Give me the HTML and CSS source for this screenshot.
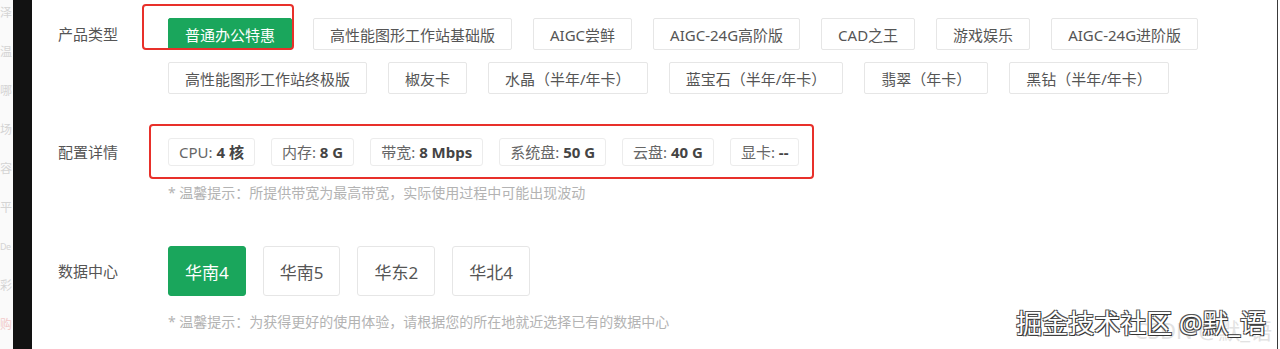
FILE: index.html
```html
<!DOCTYPE html>
<html lang="zh-CN">
<head>
  <meta charset="UTF-8">
  <meta name="viewport" content="width=device-width, initial-scale=1.0">
  <title>选择配置</title>
  <link rel="stylesheet" href="styles.css">
</head>
<body>
  <div class="screen">
    <!-- page behind, only a sliver shows -->
    <aside class="side-peek">
      <div class="peek-item">泽</div>
      <div class="peek-item">温</div>
      <div class="peek-item">哪</div>
      <div class="peek-item">场</div>
      <div class="peek-item">容</div>
      <div class="peek-item">平</div>
      <div class="peek-item peek-small">De</div>
      <div class="peek-item">彩</div>
      <div class="peek-item peek-red">购</div>
    </aside>
    <div class="divider"></div>

    <main class="panel">
      <section class="field field-product">
        <div class="field-label">产品类型</div>
        <div class="options">
          <button class="opt opt-on">普通办公特惠<span class="mark mark-product"></span></button>
          <button class="opt">高性能图形工作站基础版</button>
          <button class="opt">AIGC尝鲜</button>
          <button class="opt">AIGC-24G高阶版</button>
          <button class="opt">CAD之王</button>
          <button class="opt">游戏娱乐</button>
          <button class="opt">AIGC-24G进阶版</button>
          <button class="opt">高性能图形工作站终极版</button>
          <button class="opt">椒友卡</button>
          <button class="opt">水晶（半年/年卡）</button>
          <button class="opt">蓝宝石（半年/年卡）</button>
          <button class="opt">翡翠（年卡）</button>
          <button class="opt">黑钻（半年/年卡）</button>
        </div>
      </section>

      <section class="field field-config">
        <div class="field-label">配置详情</div>
        <div class="field-body">
          <div class="specs">
            <span class="spec">CPU: <b>4 核</b></span>
            <span class="spec">内存: <b>8 G</b></span>
            <span class="spec">带宽: <b>8 Mbps</b></span>
            <span class="spec">系统盘: <b>50 G</b></span>
            <span class="spec">云盘: <b>40 G</b></span>
            <span class="spec">显卡: <b>--</b></span>
            <span class="mark mark-config"></span>
          </div>
          <p class="tip">* 温馨提示：所提供带宽为最高带宽，实际使用过程中可能出现波动</p>
        </div>
      </section>

      <section class="field field-region">
        <div class="field-label">数据中心</div>
        <div class="field-body">
          <div class="regions">
            <button class="region region-on">华南4</button>
            <button class="region">华南5</button>
            <button class="region">华东2</button>
            <button class="region">华北4</button>
          </div>
          <p class="tip">* 温馨提示：为获得更好的使用体验，请根据您的所在地就近选择已有的数据中心</p>
        </div>
      </section>

      <div class="watermark">
        <span class="wm-back">CSDN @默_语</span>
        <span class="wm-front">掘金技术社区 @默_语</span>
      </div>
    </main>
  </div>
</body>
</html>
```

FILE: styles.css
```css
/* General Reset */
* {
  margin: 0;
  padding: 0;
  box-sizing: border-box;
  font-family: 'Noto Sans', 'Noto Sans CJK SC', sans-serif;
}

body {
  background: #fff;
  width: 1280px;
  height: 349px;
  overflow: hidden;
}

.screen {
  display: flex;
  height: 349px;
  padding-right: 2px;
}

/* sliver of the page behind */
.side-peek {
  width: 13px;
  overflow: hidden;
  background: #fafafa;
}

.peek-item {
  white-space: nowrap;
  font-size: 12px;
  line-height: 39px;
  color: #d4d4d4;
}

.peek-item:first-child {
  margin-top: -7px;
}

.peek-small {
  font-size: 9px;
  letter-spacing: -0.5px;
}

.peek-red {
  color: #f2caca;
}

.divider {
  width: 19px;
  background: #121212;
}

.panel {
  position: relative;
  flex: 1;
  background: #fff;
  border-right: 1px solid #3a3a3a;
  padding: 18px 0 0 26px;
}

/* Rows */
.field {
  display: flex;
  align-items: flex-start;
}

.field-label {
  width: 110px;
  flex-shrink: 0;
  font-size: 15px;
  color: #555;
}

.field-product .field-label {
  line-height: 32px;
}

.field-config {
  margin-top: 44px;
}

.field-config .field-label {
  line-height: 28px;
}

.field-region {
  margin-top: 43px;
}

.field-region .field-label {
  line-height: 50px;
}

/* Product options */
.options {
  display: flex;
  flex-wrap: wrap;
  gap: 12px 21px;
  width: 1060px;
}

.opt {
  position: relative;
  height: 32px;
  padding: 0 16px;
  font-size: 15px;
  color: #555;
  background: #fff;
  border: 1px solid #e6e6e6;
  border-radius: 2px;
  cursor: pointer;
}

.opt-on {
  background: #1aa65c;
  border-color: #1aa65c;
  color: #fff;
}

/* red annotation boxes */
.mark {
  position: absolute;
  border: 2px solid #e8302a;
  border-radius: 4px;
  pointer-events: none;
}

.mark-product {
  left: -27px;
  top: -15px;
  right: -3px;
  bottom: -1px;
}

.mark-config {
  left: -19px;
  top: -14px;
  right: -15px;
  bottom: -13px;
}

/* Config specs */
.specs {
  position: relative;
  display: flex;
  gap: 16px;
  width: fit-content;
}

.spec {
  height: 28px;
  padding: 0 10px;
  line-height: 26px;
  font-size: 15px;
  color: #666;
  border: 1px solid #ececec;
  border-radius: 3px;
  white-space: nowrap;
}

.spec b {
  color: #444;
  font-weight: bold;
}

.tip {
  margin-top: 17px;
  font-size: 14px;
  line-height: 20px;
  color: #b3b3b3;
}

.field-region .tip {
  margin-top: 16px;
}

/* Data centers */
.regions {
  display: flex;
  gap: 17px;
}

.region {
  height: 50px;
  padding: 0 16px;
  font-size: 17px;
  color: #555;
  background: #fff;
  border: 1px solid #e6e6e6;
  border-radius: 3px;
  cursor: pointer;
}

.region-on {
  background: #1aa65c;
  border-color: #1aa65c;
  color: #fff;
}

/* watermark */
.watermark {
  position: absolute;
  right: 11px;
  bottom: 8px;
  white-space: nowrap;
}

.wm-back {
  position: absolute;
  right: -6px;
  bottom: -4px;
  font-size: 22px;
  color: #e2e2e2;
}

.wm-front {
  position: relative;
  font-size: 26px;
  color: #fff;
  text-shadow: 1px 1px 0 #333, -1px -1px 0 #555, 1px -1px 0 #555, -1px 1px 0 #555;
}
```
